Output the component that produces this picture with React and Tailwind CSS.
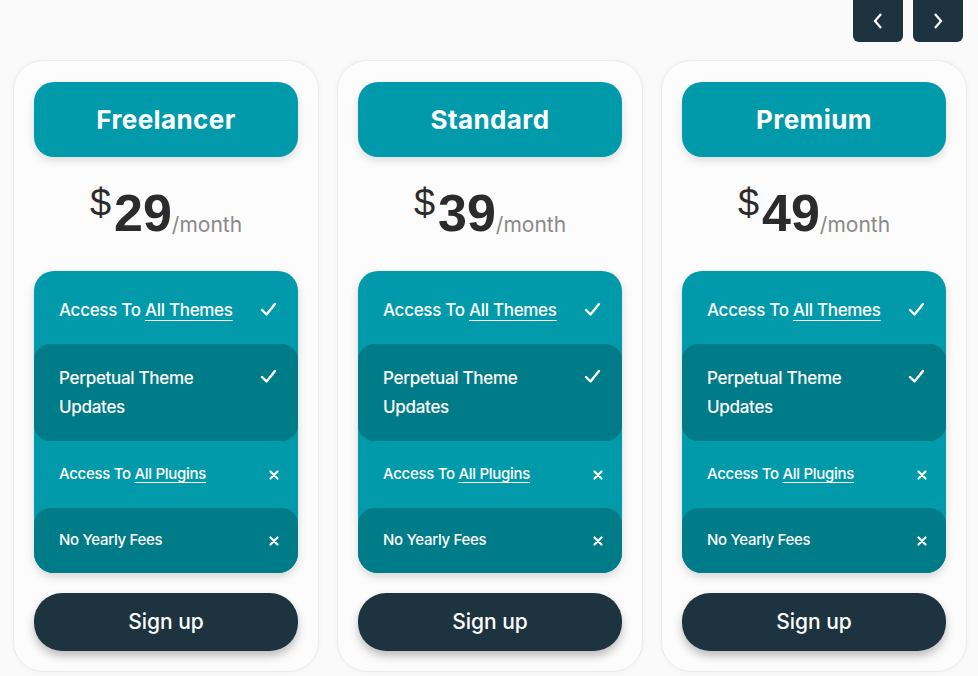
import React from "react";

const plans = [
  { name: "Freelancer", price: "29" },
  { name: "Standard", price: "39" },
  { name: "Premium", price: "49" },
];

function Check() {
  return (
    <svg width="17" height="15" viewBox="0 0 17 15" fill="none" stroke="white" strokeWidth="2.4" strokeLinecap="round" strokeLinejoin="round" className="mt-[5px]">
      <path d="M2 8 L6.5 12.5 L15 2" />
    </svg>
  );
}

function Cross() {
  return (
    <svg width="10" height="10" viewBox="0 0 10 10" stroke="white" strokeWidth="2.2" strokeLinecap="round">
      <path d="M1.5 1.5 L8.5 8.5 M8.5 1.5 L1.5 8.5" />
    </svg>
  );
}

function Features() {
  return (
    <div className="rounded-[20px] bg-[#009aab] overflow-hidden shadow-[0_4px_8px_rgba(0,0,0,0.15)] text-white font-medium font-['Inter',sans-serif]">
      <div className="flex items-start justify-between h-[73px] pl-[25px] pr-[21px] pt-[26px] text-[17px] leading-[26px] tracking-[-0.3px]">
        <span>
          Access To <span className="underline underline-offset-[4px]">All Themes</span>
        </span>
        <Check />
      </div>
      <div className="flex items-start justify-between h-[97px] pl-[25px] pr-[21px] pt-[20px] bg-[#007c89] rounded-[16px] text-[17px] leading-[29px] tracking-[-0.3px]">
        <span>
          Perpetual Theme
          <br />
          Updates
        </span>
        <Check />
      </div>
      <div className="flex items-center justify-between h-[67px] pl-[25px] pr-[19px] text-[15px] tracking-[-0.3px]">
        <span>
          Access To <span className="underline underline-offset-[3px]">All Plugins</span>
        </span>
        <Cross />
      </div>
      <div className="flex items-center justify-between h-[65px] pl-[25px] pr-[19px] bg-[#007c89] rounded-[16px] text-[15px] tracking-[-0.3px]">
        <span>No Yearly Fees</span>
        <Cross />
      </div>
    </div>
  );
}

function PlanCard({ plan }) {
  return (
    <div className="w-[306px] rounded-[30px] border border-[#ececec] bg-[#fcfcfc] px-[20px] pt-[21px] pb-[20px] shadow-[0_0_6px_rgba(0,0,0,0.04)]">
      <div className="h-[75px] rounded-[20px] bg-[#009aab] flex items-center justify-center shadow-[0_4px_8px_rgba(0,0,0,0.12)]">
        <span className="text-white text-[26px] font-bold font-['Inter',sans-serif] tracking-[0.4px]">
          {plan.name}
        </span>
      </div>
      <div className="h-[114px] flex items-center justify-center text-[#2b2b2b] font-['Liberation_Sans',sans-serif]">
        <div className="flex items-start">
          <span className="text-[38px] leading-none mt-[-3px] mr-[3px]">$</span>
          <span className="text-[52px] font-bold leading-none">{plan.price}</span>
          <span className="text-[21px] text-[#8a8a8a] mt-[22px] font-['Inter',sans-serif]">/month</span>
        </div>
      </div>
      <Features />
      <button className="mt-[20px] w-full h-[58px] rounded-[28px] bg-[#1e3340] text-white text-[21px] font-medium font-['Inter',sans-serif] shadow-[0_5px_8px_rgba(0,0,0,0.25)]">
        Sign up
      </button>
    </div>
  );
}

export default function App() {
  return (
    <div className="w-[978px] h-[676px] bg-[#fafafa] overflow-hidden">
      <div className="flex justify-end gap-[10px] pr-[15px]">
        <button className="w-[50px] h-[42px] rounded-b-[6px] bg-[#1e3340] flex items-center justify-center">
          <svg width="14" height="20" viewBox="0 0 14 20" fill="none" stroke="white" strokeWidth="2.2">
            <path d="M10 3 L4 10 L10 17" />
          </svg>
        </button>
        <button className="w-[50px] h-[42px] rounded-b-[6px] bg-[#1e3340] flex items-center justify-center">
          <svg width="14" height="20" viewBox="0 0 14 20" fill="none" stroke="white" strokeWidth="2.2">
            <path d="M4 3 L10 10 L4 17" />
          </svg>
        </button>
      </div>
      <div className="flex gap-[18px] pl-[13px] mt-[18px]">
        {plans.map((p) => (
          <PlanCard key={p.name} plan={p} />
        ))}
      </div>
    </div>
  );
}
